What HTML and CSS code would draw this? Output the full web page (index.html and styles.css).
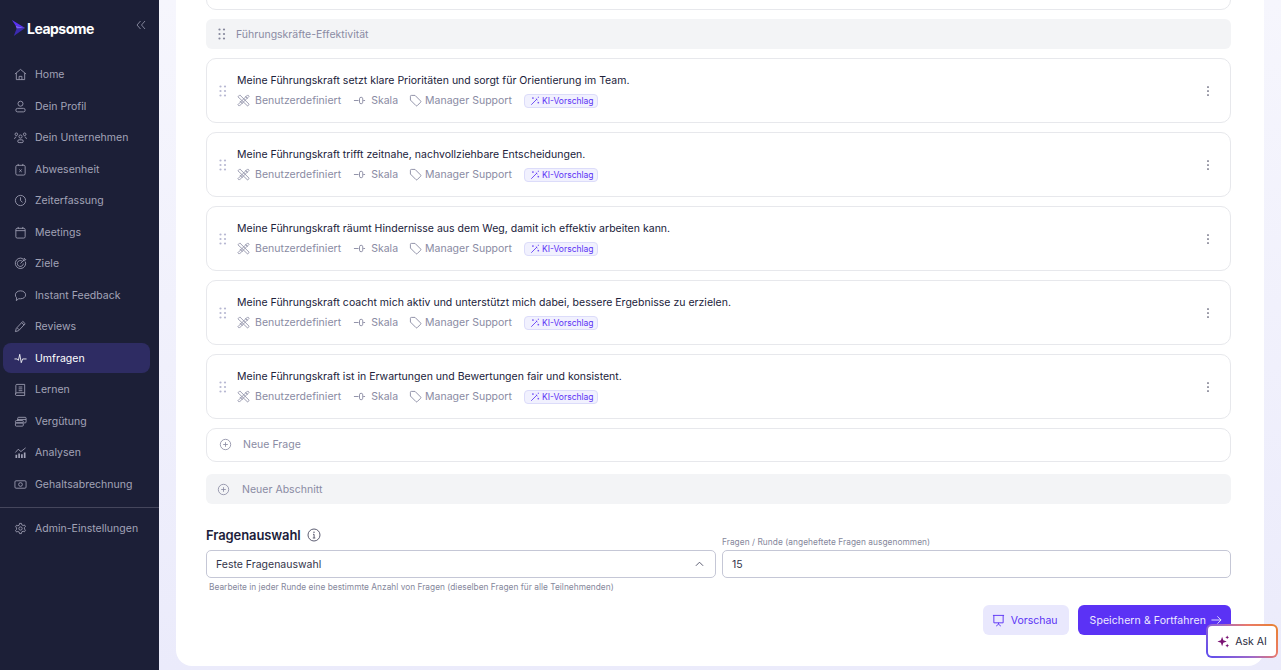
FILE: index.html
```html
<!DOCTYPE html>
<html lang="de">
  <head>
    <meta charset="UTF-8" />
    <meta name="viewport" content="width=device-width, initial-scale=1.0" />
    <title>Leapsome Umfragen</title>
    <link rel="stylesheet" href="styles.css">
  </head>
  <body>
    <svg class="sprite" width="0" height="0">
      <symbol id="i-grip" viewBox="0 0 8 12"><g fill="currentColor"><circle cx="1.5" cy="1.5" r="1.1"/><circle cx="6" cy="1.5" r="1.1"/><circle cx="1.5" cy="6" r="1.1"/><circle cx="6" cy="6" r="1.1"/><circle cx="1.5" cy="10.500" r="1.1"/><circle cx="6" cy="10.500" r="1.1"/></g></symbol>
      <symbol id="i-tools" viewBox="0 0 14 14"><g fill="none" stroke="currentColor" stroke-width=".9"><path d="M1 3l2-2 10 10-1.500 2L1 3z"/><path d="M13 2.500L11.500 1 1 11.500 2.500 13 13 2.500z"/><path d="M9 2.500l2.500 2.500M3 7.500l3 3"/></g></symbol>
      <symbol id="i-scale" viewBox="0 0 14 14"><g fill="none" stroke="currentColor" stroke-width="1"><path d="M1 7h5M11 7h2"/><rect x="7" y="3.500" width="3.500" height="7" rx="1.700"/></g></symbol>
      <symbol id="i-tag" viewBox="0 0 14 14"><path d="M1.500 2.500a1 1 0 0 1 1-1h4l6 6a1 1 0 0 1 0 1.400l-3.600 3.600a1 1 0 0 1-1.400 0l-6-6v-4z" fill="none" stroke="currentColor" stroke-width="1"/></symbol>
      <symbol id="i-wand" viewBox="0 0 12 12"><g fill="none" stroke="currentColor" stroke-width="1"><path d="M1.500 10.500L8.500 3.500M7 3l2 2"/><path d="M3.500 1.500v2M2.500 2.500h2M10 7v2M9 8h2M10 1v1M9.500 1.500h1" stroke-width=".8"/></g></symbol>
      <symbol id="i-dots" viewBox="0 0 4 12"><g fill="currentColor"><circle cx="2" cy="2" r=".85"/><circle cx="2" cy="6" r=".85"/><circle cx="2" cy="10" r=".85"/></g></symbol>
      <symbol id="i-plus" viewBox="0 0 14 14"><g fill="none" stroke="currentColor" stroke-width=".9"><circle cx="7" cy="7" r="5.600"/><path d="M7 4.500v5M4.500 7h5"/></g></symbol>
    </svg>

    <div class="app">
      <aside class="side">
        <div class="brand">
          <svg class="logo" viewBox="0 0 16 18" width="15" height="17">
            <path d="M1 0l14 8.500L5 6z" fill="#5b32f5"/>
            <path d="M15 8.500L3 17l3-8z" fill="#3c2bb0"/>
            <path d="M5 6l10 2.500L6 9z" fill="#7a5cff"/>
          </svg>
          <span class="brandName">Leapsome</span>
          <svg class="collapse" viewBox="0 0 10 10" width="10" height="10"><path d="M4.500 1L1 5l3.500 4M9 1L5.500 5 9 9" fill="none" stroke="currentColor" stroke-width=".9"/></svg>
        </div>

        <nav class="nav">
          <a class="navItem"><svg viewBox="0 0 14 14"><path d="M1 6.500L7 1.500l6 5M2.500 5.500V12.500h9V5.500M5.500 12.500V9h3v3.500"/></svg>Home</a>
          <a class="navItem"><svg viewBox="0 0 14 14"><circle cx="7" cy="4" r="2.700"/><rect x="2" y="9" width="10" height="3.800" rx="1.800"/></svg>Dein Profil</a>
          <a class="navItem"><svg viewBox="0 0 14 14"><circle cx="7" cy="6" r="1.700"/><circle cx="2.500" cy="3.500" r="1.400"/><circle cx="11.500" cy="3.500" r="1.400"/><rect x="4" y="9.500" width="6" height="3" rx="1.500"/><path d="M.5 8.500q.5-2 2-2.200M13.500 8.500q-.5-2-2-2.200"/></svg>Dein Unternehmen</a>
          <a class="navItem"><svg viewBox="0 0 14 14"><rect x="2" y="2.500" width="10" height="10.500" rx="1.500"/><path d="M4.500 1v2M9.500 1v2M5.700 7l2.600 2.600M8.300 7L5.700 9.600"/></svg>Abwesenheit</a>
          <a class="navItem"><svg viewBox="0 0 14 14"><circle cx="7" cy="7" r="5.500"/><path d="M7 3.500V7l2.200 2"/></svg>Zeiterfassung</a>
          <a class="navItem"><svg viewBox="0 0 14 14"><rect x="2" y="2.500" width="10" height="10.500" rx="1.500"/><path d="M4.500 1v2M9.500 1v2M2 5h10"/></svg>Meetings</a>
          <a class="navItem"><svg viewBox="0 0 14 14"><path d="M9.500 1.800A5.600 5.600 0 1 0 12.300 5"/><path d="M8.500 4.300A3.200 3.200 0 1 0 10 7"/><path d="M7 7l4-4M10 2.500V4h1.500l1.200-1.300-1.300-.2-.2-1.200z"/></svg>Ziele</a>
          <a class="navItem"><svg viewBox="0 0 14 14"><path d="M7 2c3.300 0 5.500 1.900 5.500 4.300S10.300 10.500 7 10.500H5L2.500 12.500l.3-3C1.900 8.700 1.500 7.500 1.500 6.300 1.500 3.900 3.700 2 7 2z"/></svg>Instant Feedback</a>
          <a class="navItem"><svg viewBox="0 0 14 14"><path d="M1.500 12.500l1-3.500 7-7.500 2.500 2.500-7 7.500-3.500 1zM8.500 3l2.500 2.500M3.500 8.500l2 2"/></svg>Reviews</a>
          <a class="navItem active"><svg viewBox="0 0 14 14"><path d="M.5 7.500h3l1.200 1.500 1.500-6.500 1.600 9 1.500-4h4.200"/></svg>Umfragen</a>
          <a class="navItem"><svg viewBox="0 0 14 14"><path d="M2 11.500V2.500a1 1 0 0 1 1-1h8.500v9H3a1 1 0 0 0 0 3h8.500V10.500M5 4.300h4M5 6.300h4M5 8.300h4"/></svg>Lernen</a>
          <a class="navItem"><svg viewBox="0 0 14 14"><rect x="1.500" y="6" width="8.500" height="2.500" rx="1"/><rect x="1.500" y="8.500" width="8.500" height="3.500" rx="1"/><path d="M4 6V3.500a1 1 0 0 1 1-1h7a1 1 0 0 1 1 1v4a1 1 0 0 1-1 1h-2M4 4.800h9"/></svg>Vergütung</a>
          <a class="navItem"><svg viewBox="0 0 14 14"><path d="M2.500 13V9.500M5.500 13V8M8.500 13V9M11.500 13V7" stroke-width="1.800"/><path d="M1.500 7l3-3.500 3 2.500 5-4"/></svg>Analysen</a>
          <a class="navItem"><svg viewBox="0 0 14 14"><rect x="1" y="3" width="12" height="8" rx="1.200"/><circle cx="7" cy="7" r="2"/></svg>Gehaltsabrechnung</a>
        </nav>

        <div class="sideFoot">
          <a class="navItem"><svg viewBox="0 0 14 14"><path d="M6 1.500h2l.4 1.600 1.400.7 1.500-.6 1 1.700-1.100 1.100v1.600l1.100 1.200-1 1.700-1.500-.6-1.400.7L8 12.500H6l-.4-1.600-1.400-.7-1.500.6-1-1.700 1.100-1.200V6.300L1.700 5.200l1-1.700 1.500.6 1.400-.7z"/><circle cx="7" cy="7" r="1.800"/></svg>Admin-Einstellungen</a>
        </div>
      </aside>

      <main class="main">
        <div class="card">
          <div class="list">
            <div class="question clipped"></div>

            <div class="section">
              <svg class="grip"><use href="#i-grip"/></svg>
              Führungskräfte-Effektivität
            </div>

            <div class="question">
              <svg class="grip"><use href="#i-grip"/></svg>
              <div class="qBody">
                <p class="qText">Meine Führungskraft setzt klare Prioritäten und sorgt für Orientierung im Team.</p>
                <div class="meta">
                  <span class="metaItem"><svg><use href="#i-tools"/></svg>Benutzerdefiniert</span>
                  <span class="metaItem"><svg><use href="#i-scale"/></svg>Skala</span>
                  <span class="metaItem"><svg><use href="#i-tag"/></svg>Manager Support</span>
                  <span class="chip"><svg><use href="#i-wand"/></svg>KI-Vorschlag</span>
                </div>
              </div>
              <svg class="dots"><use href="#i-dots"/></svg>
            </div>

            <div class="question">
              <svg class="grip"><use href="#i-grip"/></svg>
              <div class="qBody">
                <p class="qText">Meine Führungskraft trifft zeitnahe, nachvollziehbare Entscheidungen.</p>
                <div class="meta">
                  <span class="metaItem"><svg><use href="#i-tools"/></svg>Benutzerdefiniert</span>
                  <span class="metaItem"><svg><use href="#i-scale"/></svg>Skala</span>
                  <span class="metaItem"><svg><use href="#i-tag"/></svg>Manager Support</span>
                  <span class="chip"><svg><use href="#i-wand"/></svg>KI-Vorschlag</span>
                </div>
              </div>
              <svg class="dots"><use href="#i-dots"/></svg>
            </div>

            <div class="question">
              <svg class="grip"><use href="#i-grip"/></svg>
              <div class="qBody">
                <p class="qText">Meine Führungskraft räumt Hindernisse aus dem Weg, damit ich effektiv arbeiten kann.</p>
                <div class="meta">
                  <span class="metaItem"><svg><use href="#i-tools"/></svg>Benutzerdefiniert</span>
                  <span class="metaItem"><svg><use href="#i-scale"/></svg>Skala</span>
                  <span class="metaItem"><svg><use href="#i-tag"/></svg>Manager Support</span>
                  <span class="chip"><svg><use href="#i-wand"/></svg>KI-Vorschlag</span>
                </div>
              </div>
              <svg class="dots"><use href="#i-dots"/></svg>
            </div>

            <div class="question">
              <svg class="grip"><use href="#i-grip"/></svg>
              <div class="qBody">
                <p class="qText">Meine Führungskraft coacht mich aktiv und unterstützt mich dabei, bessere Ergebnisse zu erzielen.</p>
                <div class="meta">
                  <span class="metaItem"><svg><use href="#i-tools"/></svg>Benutzerdefiniert</span>
                  <span class="metaItem"><svg><use href="#i-scale"/></svg>Skala</span>
                  <span class="metaItem"><svg><use href="#i-tag"/></svg>Manager Support</span>
                  <span class="chip"><svg><use href="#i-wand"/></svg>KI-Vorschlag</span>
                </div>
              </div>
              <svg class="dots"><use href="#i-dots"/></svg>
            </div>

            <div class="question">
              <svg class="grip"><use href="#i-grip"/></svg>
              <div class="qBody">
                <p class="qText">Meine Führungskraft ist in Erwartungen und Bewertungen fair und konsistent.</p>
                <div class="meta">
                  <span class="metaItem"><svg><use href="#i-tools"/></svg>Benutzerdefiniert</span>
                  <span class="metaItem"><svg><use href="#i-scale"/></svg>Skala</span>
                  <span class="metaItem"><svg><use href="#i-tag"/></svg>Manager Support</span>
                  <span class="chip"><svg><use href="#i-wand"/></svg>KI-Vorschlag</span>
                </div>
              </div>
              <svg class="dots"><use href="#i-dots"/></svg>
            </div>

            <div class="addQuestion"><svg><use href="#i-plus"/></svg>Neue Frage</div>
          </div>

          <div class="addSection"><svg><use href="#i-plus"/></svg>Neuer Abschnitt</div>

          <h2 class="title">Fragenauswahl
            <svg viewBox="0 0 14 14" width="14" height="14"><g fill="none" stroke="currentColor" stroke-width=".9"><circle cx="7" cy="7" r="6"/><path d="M6 6.300h1.100V10M5.800 10h2.500"/></g><circle cx="7" cy="4.200" r=".7" fill="currentColor"/></svg>
          </h2>

          <div class="fields">
            <div class="field fieldLeft">
              <div class="select">Feste Fragenauswahl
                <svg viewBox="0 0 10 6" width="9" height="6"><path d="M1 5l4-4 4 4" fill="none" stroke="currentColor" stroke-width="1"/></svg>
              </div>
              <p class="hint">Bearbeite in jeder Runde eine bestimmte Anzahl von Fragen (dieselben Fragen für alle Teilnehmenden)</p>
            </div>
            <div class="field">
              <label class="fieldLabel">Fragen / Runde (angeheftete Fragen ausgenommen)</label>
              <div class="select">15</div>
            </div>
          </div>

          <div class="actions">
            <button class="btn btnSoft">
              <svg viewBox="0 0 14 14" width="13" height="13"><path d="M1 1.500h12M2 1.500v8h10v-8M7 9.500v1.500M4.500 13L7 11l2.500 2" fill="none" stroke="currentColor" stroke-width="1"/></svg>
              Vorschau
            </button>
            <button class="btn btnMain">
              Speichern &amp; Fortfahren
              <svg viewBox="0 0 12 10" width="11" height="10"><path d="M.5 5h10.500M7 1l4 4-4 4" fill="none" stroke="currentColor" stroke-width="1"/></svg>
            </button>
          </div>
        </div>
      </main>
    </div>

    <div class="askAi">
      <div class="askInner">
        <svg viewBox="0 0 14 14" width="13" height="13"><path d="M5.500 2l1.300 3.700L10.500 7 6.800 8.300 5.500 12 4.200 8.300.5 7l3.700-1.300z M11 .5l.6 1.400 1.400.6-1.400.6-.6 1.400-.6-1.400L9 2.500l1.400-.6z M11 9.500l.6 1.400 1.400.6-1.400.6-.6 1.400-.6-1.400-1.400-.6 1.400-.6z" fill="#7a1273"/></svg>
        Ask AI
      </div>
    </div>
  </body>
</html>
```

FILE: styles.css
```css
* {
  box-sizing: border-box;
}

body {
  margin: 0;
  height: 670px;
  overflow: hidden;
  font-family: "Inter", "Noto Sans", sans-serif;
  color: #1c1d3a;
  background-color: #f0f0fc;
}

.sprite {
  position: absolute;
}

.app {
  display: flex;
  height: 670px;
}

/* sidebar */
.side {
  width: 159px;
  flex: none;
  background-color: #1c1f37;
  color: #a3a4b8;
  padding: 20px 0 0;
}

.brand {
  display: flex;
  align-items: center;
  padding: 0 13px 0 11px;
  height: 17px;
  margin-bottom: 21.8px;
}

.logo {
  flex: none;
}

.brandName {
  margin-left: 1px;
  font-size: 14px;
  font-weight: 700;
  letter-spacing: -0.5px;
  color: #ffffff;
}

.collapse {
  margin-left: auto;
  margin-top: -8px;
  color: #8b8da3;
}

.nav {
  display: flex;
  flex-direction: column;
  padding: 0 9px 0 3px;
}

.navItem {
  display: flex;
  align-items: center;
  gap: 8px;
  height: 31.5px;
  padding-left: 11px;
  font-size: 10.5px;
  letter-spacing: 0.02px;
  border-radius: 8px;
}

.navItem svg {
  width: 13px;
  height: 13px;
  flex: none;
  fill: none;
  stroke: currentColor;
  stroke-width: 0.9;
}

.navItem.active {
  height: 30px;
  margin: 0.75px 0;
  background-color: #2e2c63;
  color: #ffffff;
}

.sideFoot {
  margin-top: 7px;
  padding: 5px 9px 0 3px;
  border-top: 1px solid #45465c;
}

/* main card */
.main {
  flex: 1;
  min-width: 0;
  display: flex;
  flex-direction: column;
  justify-content: flex-end;
  overflow: hidden;
  padding: 0 17px 4px;
  background: linear-gradient(180deg, #f6f6fd, #ebebfb);
}

.card {
  flex: none;
  background-color: #ffffff;
  border-radius: 0 0 16px 16px;
  padding: 0 33px 31px 30px;
}

.list {
  display: flex;
  flex-direction: column;
  gap: 9px;
}

.section {
  display: flex;
  align-items: center;
  height: 30px;
  padding-left: 12px;
  gap: 10px;
  background-color: #f3f4f6;
  border-radius: 6px;
  font-size: 10.5px;
  color: #8a8ba3;
}

.grip {
  width: 8px;
  height: 12px;
  flex: none;
  color: #85879b;
}

.question {
  display: flex;
  align-items: center;
  height: 65px;
  padding: 0 20px 0 12px;
  border: 1px solid #e7e8ec;
  border-radius: 10px;
  background-color: #ffffff;
}

.question .grip {
  color: #b7b8d2;
}

.question.clipped {
  height: 40px;
}

.qBody {
  flex: 1;
  margin: 0 0 1px 10px;
}

.qText {
  margin: 0 0 6px;
  font-size: 10.5px;
  line-height: 15px;
  color: #20213a;
  letter-spacing: 0.015px;
}

.meta {
  display: flex;
  align-items: center;
  gap: 12px;
  height: 14px;
}

.metaItem {
  display: flex;
  align-items: center;
  gap: 5px;
  font-size: 10.5px;
  color: #8a8ba3;
  letter-spacing: 0.02px;
}

.metaItem:nth-child(3) {
  gap: 3px;
  margin-left: -1px;
}

.metaItem svg {
  width: 13px;
  height: 13px;
  flex: none;
}

.chip {
  display: flex;
  align-items: center;
  gap: 2px;
  height: 14px;
  padding: 0 3px 0 5px;
  border: 1px solid #dcdcfa;
  border-radius: 4px;
  background-color: #f1f1fe;
  color: #5b32f5;
  font-size: 8.5px;
}

.chip svg {
  width: 10px;
  height: 10px;
}

.dots {
  width: 4px;
  height: 12px;
  flex: none;
  color: #4b4c63;
}

.addQuestion,
.addSection {
  display: flex;
  align-items: center;
  font-size: 10.5px;
  color: #8a8ba3;
  letter-spacing: 0.02px;
}

.addQuestion svg,
.addSection svg {
  width: 13px;
  height: 13px;
  flex: none;
}

.addQuestion {
  height: 34px;
  padding: 0 0 1px 12px;
  gap: 11px;
  border: 1px solid #e7e8ec;
  border-radius: 10px;
}

.addSection {
  height: 30px;
  margin-top: 12px;
  padding-left: 11px;
  gap: 12px;
  background-color: #f3f4f6;
  border-radius: 6px;
}

/* fragenauswahl */
.title {
  display: flex;
  align-items: center;
  gap: 6px;
  margin: 23px 0 0;
  height: 16px;
  font-size: 13px;
  font-weight: 600;
  letter-spacing: -0.1px;
}

.title svg {
  color: #4b4c63;
}

.fields {
  display: grid;
  grid-template-columns: 510px 1fr;
  gap: 6px;
  margin-top: -8px;
}

.field {
  display: flex;
  flex-direction: column;
}

.fieldLeft {
  padding-top: 15px;
}

.fieldLabel {
  height: 15px;
  padding-top: 1px;
  font-size: 8.3px;
  line-height: 12px;
  color: #85879b;
  letter-spacing: 0.06px;
}

.select {
  display: flex;
  align-items: center;
  justify-content: space-between;
  height: 28px;
  padding: 0 9px;
  border: 1px solid #c5c7d6;
  border-radius: 5px;
  font-size: 10.5px;
  color: #33344a;
}

.select svg {
  color: #4b4c63;
  margin-right: 2px;
}

.hint {
  margin: 3px 0 0 3px;
  font-size: 8.3px;
  line-height: 12px;
  color: #85879b;
  letter-spacing: 0.03px;
}

.actions {
  display: flex;
  justify-content: flex-end;
  gap: 9px;
  margin-top: 12px;
}

.btn {
  display: flex;
  align-items: center;
  height: 30px;
  border: none;
  border-radius: 6px;
  font-family: inherit;
  font-size: 10.5px;
}

.btnSoft {
  gap: 6px;
  padding: 0 11px 0 9px;
  background-color: #e9e8fd;
  color: #5b32f5;
}

.btnMain {
  gap: 5px;
  padding: 0 9px 0 12px;
  background-color: #5b32f5;
  color: #eeeaff;
  letter-spacing: 0.09px;
}

/* floats over the bottom corner */
.askAi {
  position: fixed;
  left: 1206px;
  top: 624px;
  width: 72px;
  height: 34px;
  padding: 2px;
  border-radius: 6px;
  background: linear-gradient(45deg, #5b4bf0 0%, #a06ac8 45%, #ea7a6a 70%, #e8822c 100%);
}

.askInner {
  display: flex;
  align-items: center;
  justify-content: center;
  gap: 5px;
  height: 100%;
  border-radius: 4px;
  background-color: #ffffff;
  font-size: 10.5px;
  color: #2a2b40;
}
```
